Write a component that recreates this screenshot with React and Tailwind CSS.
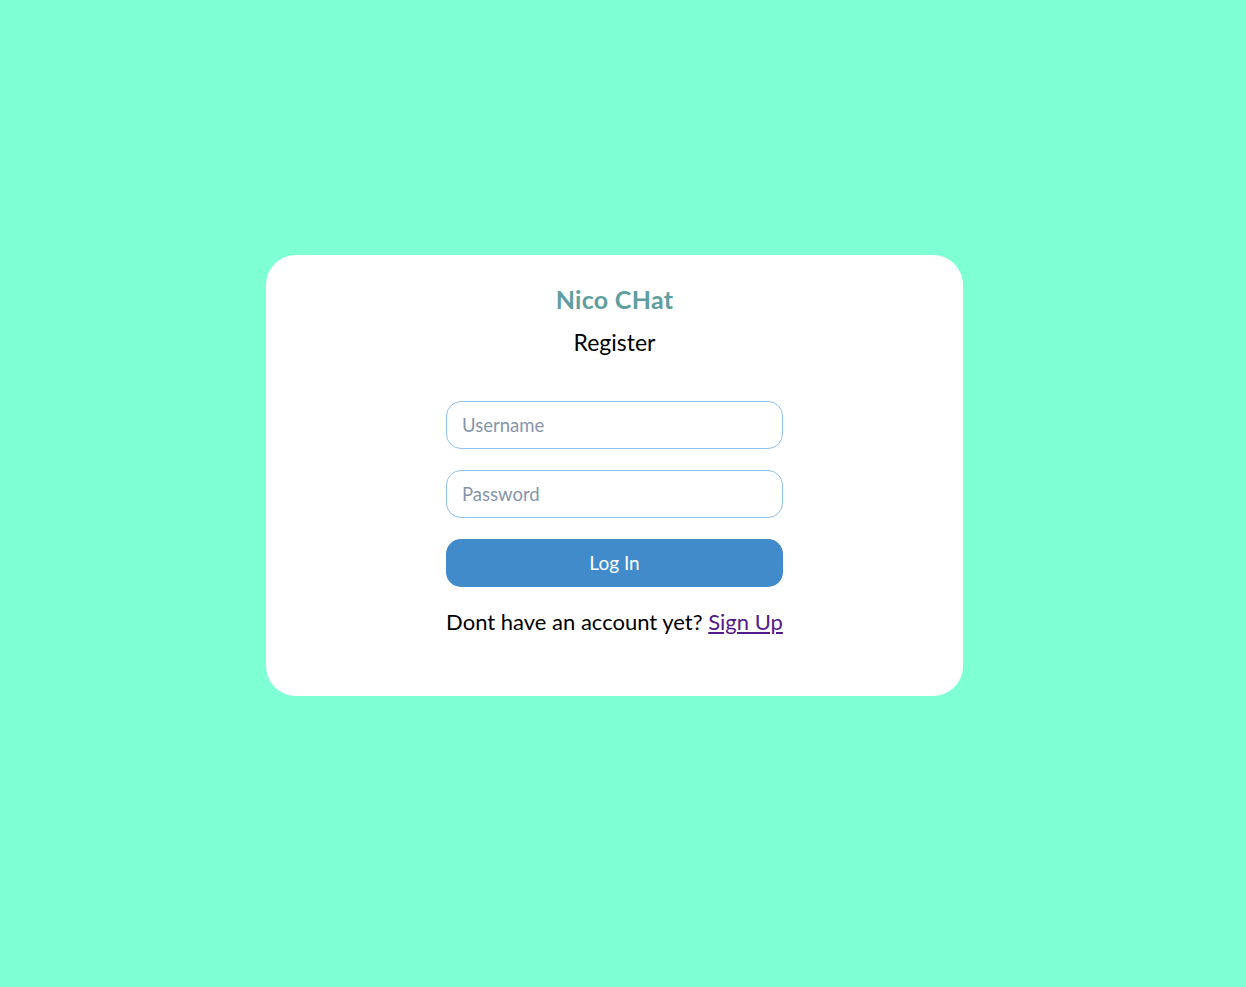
export default function App() {
  return (
    <div
      className="min-h-screen w-full bg-[#7fffd4] pt-[255px] pl-[266px]"
      style={{ fontFamily: "Lato, 'Open Sans', sans-serif" }}
    >
      <div className="w-[697px] h-[441px] bg-white rounded-[30px] flex flex-col items-center pt-[29px]">
        <h1 className="text-[25px] leading-[30px] font-bold tracking-[0.3px] text-[#5f9ea0]">Nico CHat</h1>
        <h2 className="mt-[13px] text-[23px] leading-[30px] text-black">Register</h2>
        <form className="mt-[44px] w-[337px] flex flex-col gap-[21px]">
          <input
            type="text"
            placeholder="Username"
            className="h-[48px] w-full rounded-[15px] border border-[#8ec0ee] px-[15px] text-[18.5px] text-black placeholder:text-[#8596ab] outline-none"
          />
          <input
            type="password"
            placeholder="Password"
            className="h-[48px] w-full rounded-[15px] border border-[#8ec0ee] px-[15px] text-[18.5px] text-black placeholder:text-[#8596ab] outline-none"
          />
          <button
            type="button"
            className="h-[48px] w-full rounded-[15px] bg-[#418bcb] text-white text-[19px]"
          >
            Log In
          </button>
        </form>
        <p className="mt-[20px] text-[22px] leading-[30px] text-black">
          Dont have an account yet?{" "}
          <a href="#" className="text-[#551a8b] underline">
            Sign Up
          </a>
        </p>
      </div>
    </div>
  );
}
